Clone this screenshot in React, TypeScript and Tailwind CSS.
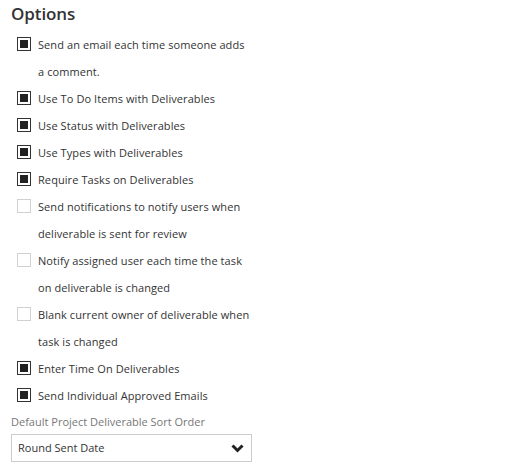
const options: { lines: string[]; checked: boolean }[] = [
  { lines: ['Send an email each time someone adds', 'a comment.'], checked: true },
  { lines: ['Use To Do Items with Deliverables'], checked: true },
  { lines: ['Use Status with Deliverables'], checked: true },
  { lines: ['Use Types with Deliverables'], checked: true },
  { lines: ['Require Tasks on Deliverables'], checked: true },
  { lines: ['Send notifications to notify users when', 'deliverable is sent for review'], checked: false },
  { lines: ['Notify assigned user each time the task', 'on deliverable is changed'], checked: false },
  { lines: ['Blank current owner of deliverable when', 'task is changed'], checked: false },
  { lines: ['Enter Time On Deliverables'], checked: true },
  { lines: ['Send Individual Approved Emails'], checked: true },
]

function Box({ checked }: { checked: boolean }) {
  if (!checked) {
    return <span className="mt-[6px] block h-[14px] w-[14px] shrink-0 border border-[#d0d0d0] bg-white" />
  }
  return (
    <span className="mt-[6px] flex h-[14px] w-[14px] shrink-0 items-center justify-center border border-[#333] bg-white">
      <span className="block h-[8px] w-[8px] bg-[#222]" />
    </span>
  )
}

export default function App() {
  return (
    <div className="min-h-[467px] w-[530px] bg-white pl-[11px] pt-[2px] text-[#333] [font-family:'Open_Sans',sans-serif]">
      <h3 className="text-[17px] font-semibold leading-[24px] tracking-[-0.1px]">Options</h3>

      <div className="mt-[5px] flex flex-col">
        {options.map((o) => (
          <label key={o.lines[0]} className="flex gap-[7px] pl-[6px]">
            <Box checked={o.checked} />
            <span className="flex flex-col text-[11px] leading-[27px] tracking-[0.08px] whitespace-nowrap">
              {o.lines.map((l) => (
                <span key={l}>{l}</span>
              ))}
            </span>
          </label>
        ))}
      </div>

      <div className="mt-[3px] text-[11px] leading-[20px] text-[#777]">Default Project Deliverable Sort Order</div>
      <div className="mt-[2px] flex h-[28px] w-[241px] items-center justify-between border border-[#ccc] bg-white pl-[6px] pr-[7px]">
        <span className="text-[11px]">Round Sent Date</span>
        <svg width="13" height="9" viewBox="0 0 13 9" className="text-[#222]">
          <path d="M1.5 1.5 L6.5 6.5 L11.5 1.5" fill="none" stroke="currentColor" strokeWidth="3" />
        </svg>
      </div>
    </div>
  )
}
